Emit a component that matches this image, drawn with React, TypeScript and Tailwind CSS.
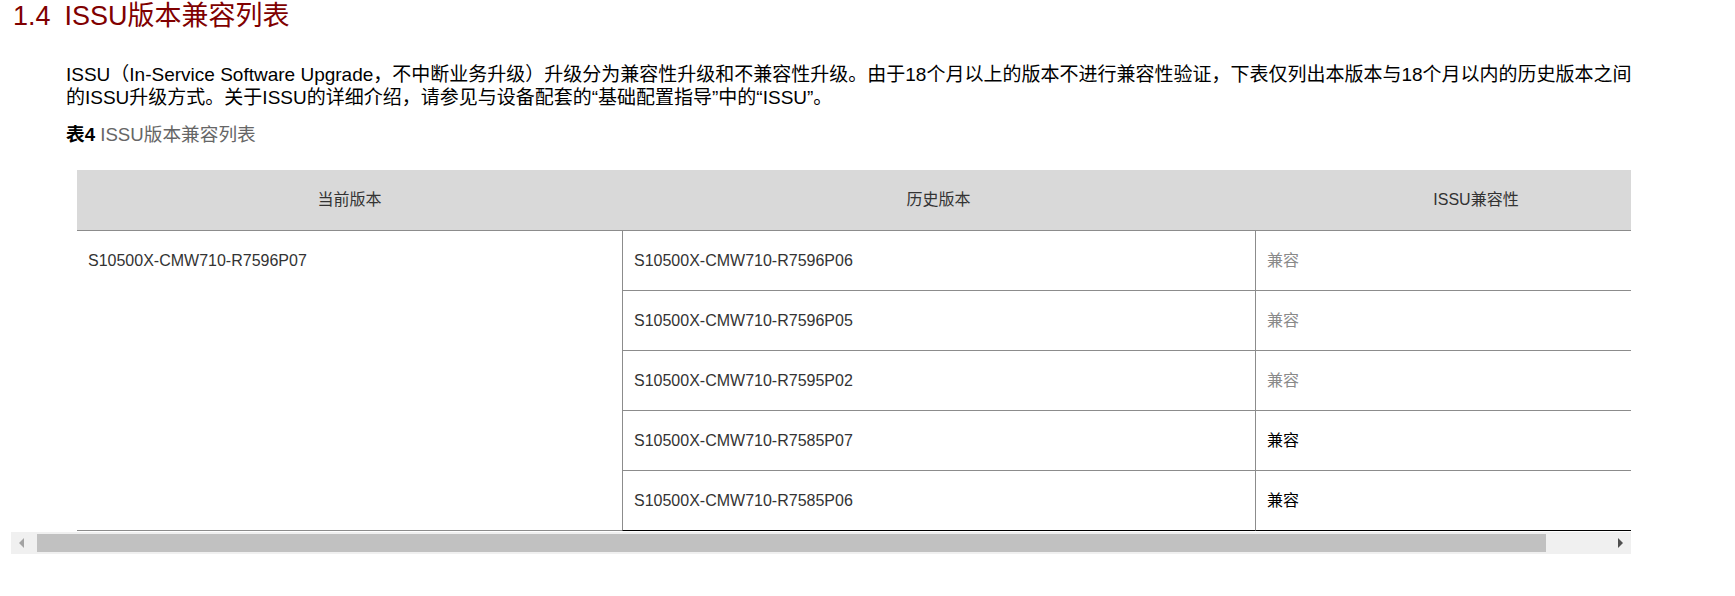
import React from "react";

const rows = [
  { v: "S10500X-CMW710-R7596P06", c: "兼容", gray: true },
  { v: "S10500X-CMW710-R7596P05", c: "兼容", gray: true },
  { v: "S10500X-CMW710-R7595P02", c: "兼容", gray: true },
  { v: "S10500X-CMW710-R7585P07", c: "兼容", gray: false },
  { v: "S10500X-CMW710-R7585P06", c: "兼容", gray: false },
];

export default function App() {
  return (
    <div className="w-[1735px] h-[596px] bg-white overflow-hidden font-['Liberation_Sans','Noto_Sans_CJK_SC',sans-serif]">
      <h2 className="pl-[13px] pt-[1px] text-[27px] leading-[30px] font-normal text-[#800000] whitespace-nowrap">
        <span className="mr-[14px]">1.4</span>ISSU版本兼容列表
      </h2>
      <p className="ml-[66px] mt-[32px] w-[1620px] text-[19px] leading-[23px] text-black whitespace-nowrap">
        ISSU（In-Service Software Upgrade，不中断业务升级）升级分为兼容性升级和不兼容性升级。由于18个月以上的版本不进行兼容性验证，下表仅列出本版本与18个月以内的历史版本之间
        <br />
        的ISSU升级方式。关于ISSU的详细介绍，请参见与设备配套的“基础配置指导”中的“ISSU”。
      </p>
      <div className="ml-[66px] mt-[14px] text-[18.67px] leading-[23px] whitespace-nowrap">
        <span className="font-bold text-black">表4</span>
        <span className="text-[#666666]"> ISSU版本兼容列表</span>
      </div>

      <div className="ml-[11px] mt-[24px] w-[1620px]">
        <div className="w-[1620px] overflow-hidden">
          <div className="ml-[66px] w-[1620px] text-[16px] text-[#333333]">
            <div className="grid grid-cols-[545px_633px_442px] h-[61px] bg-[#d9d9d9] border-b border-[#8c8c8c]">
              <div className="flex items-center justify-center">当前版本</div>
              <div className="flex items-center justify-center">历史版本</div>
              <div className="flex items-center justify-center">ISSU兼容性</div>
            </div>
            <div className="grid grid-cols-[545px_633px_442px] grid-rows-[repeat(5,60px)]">
              <div className="row-span-5 border-b border-[#8c8c8c] pl-[11px]">
                <div className="h-[59px] flex items-center">S10500X-CMW710-R7596P07</div>
              </div>
              {rows.map((r, i) => {
                const last = i === rows.length - 1;
                return (
                  <React.Fragment key={r.v}>
                    <div
                      className={
                        last
                          ? "flex items-center pl-[11px] border-l border-l-[#8c8c8c] border-b border-b-black"
                          : "flex items-center pl-[11px] border-l border-l-[#8c8c8c] border-b border-b-[#8c8c8c]"
                      }
                    >
                      {r.v}
                    </div>
                    <div
                      className={
                        (last
                          ? "flex items-center pl-[11px] border-l border-l-[#8c8c8c] border-b border-b-black "
                          : "flex items-center pl-[11px] border-l border-l-[#8c8c8c] border-b border-b-[#8c8c8c] ") +
                        (r.gray ? "text-[#8a8a8a]" : "text-black")
                      }
                    >
                      {r.c}
                    </div>
                  </React.Fragment>
                );
              })}
            </div>
          </div>
        </div>

        {/* horizontal scrollbar */}
        <div className="mt-[1px] h-[22px] w-[1620px] bg-[#f0f0f0] flex items-stretch">
          <div className="w-[20px] flex items-center justify-center">
            <div className="w-0 h-0 border-y-[5px] border-y-transparent border-r-[5px] border-r-[#a3a3a3]" />
          </div>
          <div className="w-[6px]" />
          <div className="w-[1509px] my-[2px] bg-[#c1c1c1]" />
          <div className="flex-1" />
          <div className="w-[22px] flex items-center justify-center">
            <div className="w-0 h-0 border-y-[5px] border-y-transparent border-l-[5px] border-l-[#505050]" />
          </div>
        </div>
      </div>
    </div>
  );
}
